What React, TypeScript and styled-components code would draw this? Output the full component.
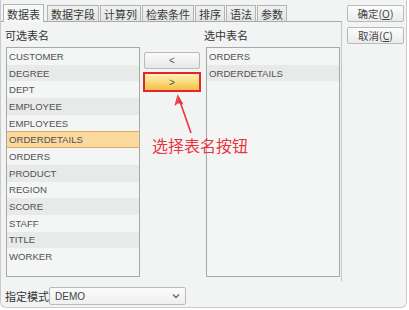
import React from 'react';
import styled, { createGlobalStyle } from 'styled-components';

const GlobalStyle = createGlobalStyle`
  html, body {
    margin: 0;
    padding: 0;
    background: #ffffff;
  }
  body {
    font-family: "Liberation Sans", "Noto Sans CJK SC", sans-serif;
  }
`;

const cjk = `"Noto Sans CJK SC", "Liberation Sans", sans-serif`;
const latin = `"Liberation Sans", "Noto Sans CJK SC", sans-serif`;

const Dialog = styled.div`
  position: relative;
  width: 407px;
  height: 308px;
  box-sizing: border-box;
  background: #f2f3f3;
  border: 1px solid #c9caca;
  border-top: none;
  border-radius: 0 0 6px 6px;
  display: flex;
  flex-direction: column;
  overflow: hidden;
`;

const TopRow = styled.div`
  display: flex;
  flex-direction: row;
`;

const TabArea = styled.div`
  width: 341px;
  display: flex;
  flex-direction: column;
`;

const TabBar = styled.div`
  height: 21px;
  display: flex;
  align-items: flex-end;
  gap: 1px;
  padding-left: 2px;
`;

const Tab: any = styled.div`
  height: ${(p: any) => (p.active ? '18px' : '16px')};
  box-sizing: border-box;
  padding: 0 3px;
  display: flex;
  align-items: center;
  font-family: ${cjk};
  font-size: 11px;
  color: #3a3a3a;
  border: 1px solid #b3b4b4;
  border-bottom: none;
  background: ${(p: any) =>
    p.active ? '#f7f8f8' : 'linear-gradient(#f0f1f1, #e3e4e4)'};
  margin-bottom: ${(p: any) => (p.active ? '-1px' : '0')};
  position: relative;
  z-index: ${(p: any) => (p.active ? 1 : 0)};
  margin-right: ${(p: any) => (p.active ? '2px' : '0')};
`;

const Panel = styled.div`
  border-top: 1px solid #a9aaaa;
  border-right: 1px solid #c4c5c5;
  height: 259px;
  display: flex;
  flex-direction: column;
  padding-left: 4px;
`;

const LabelRow = styled.div`
  height: 25px;
  display: flex;
`;

const Caption: any = styled.div`
  font-family: ${cjk};
  font-size: 11px;
  line-height: 13px;
  padding-top: ${(p: any) => (p.flat ? 0 : 7)}px;
  color: #333333;
  width: ${(p: any) => p.width}px;
`;

const ListsRow = styled.div`
  display: flex;
  flex-direction: row;
  align-items: flex-start;
`;

const ListBox: any = styled.div`
  width: 134px;
  height: 230px;
  box-sizing: border-box;
  border: 1px solid #a7a8a8;
  background: #f4f5f5;
  margin-left: ${(p: any) => p.offset || 0}px;
  overflow: hidden;
`;

const ListRow: any = styled.div`
  height: 16.7px;
  box-sizing: border-box;
  display: flex;
  align-items: center;
  padding-left: 2px;
  font-family: ${latin};
  font-size: 9.6px;
  color: #525252;
  background: ${(p: any) =>
    p.selected ? '#fbd99d' : p.odd ? '#e8e9e9' : 'transparent'};
  border: 1px solid ${(p: any) => (p.selected ? '#dcab62' : 'transparent')};
  border-left: none;
  border-right: none;
`;

const MoveColumn = styled.div`
  width: 58px;
  margin-left: 3px;
  padding-top: 5px;
  display: flex;
  flex-direction: column;
  align-items: center;
  gap: 3px;
`;

const MoveButton: any = styled.div`
  box-sizing: border-box;
  width: ${(p: any) => (p.highlight ? '58px' : '56px')};
  height: ${(p: any) => (p.highlight ? '20px' : '17px')};
  display: flex;
  align-items: center;
  justify-content: center;
  font-family: ${latin};
  font-size: 10px;
  color: #555555;
  border: ${(p: any) => (p.highlight ? '2px solid #e3262b' : '1px solid #b9baba')};
  background: ${(p: any) =>
    p.highlight
      ? 'linear-gradient(#fdf1b8, #f9d977 55%, #f4bd45)'
      : 'linear-gradient(#fbfbfb, #e6e7e7)'};
  border-radius: ${(p: any) => (p.highlight ? '0' : '2px')};
`;

const SideButtons = styled.div`
  margin-left: 5px;
  padding-top: 5px;
  display: flex;
  flex-direction: column;
  gap: 5px;
`;

const DialogButton = styled.div`
  width: 57px;
  height: 17px;
  box-sizing: border-box;
  display: flex;
  align-items: center;
  justify-content: center;
  font-family: ${cjk};
  font-size: 10.5px;
  color: #444444;
  border: 1px solid #b8b9b9;
  border-radius: 2px;
  background: linear-gradient(#fdfdfd, #eaebeb);
  u {
    text-decoration: underline;
  }
`;

const BottomRow = styled.div`
  display: flex;
  align-items: center;
  padding: 6px 0 0 4px;
`;

const SchemaSelect = styled.div`
  width: 137px;
  height: 18px;
  box-sizing: border-box;
  border: 1px solid #b9baba;
  border-radius: 2px;
  background: linear-gradient(#fbfbfb, #eeefef);
  display: flex;
  align-items: center;
  justify-content: space-between;
  padding: 0 5px;
  font-family: ${latin};
  font-size: 10px;
  color: #444444;
`;

const Annotation = styled.div`
  position: absolute;
  left: 151px;
  top: 136px;
  font-family: ${cjk};
  font-size: 16px;
  line-height: 18px;
  color: #e8353f;
  white-space: nowrap;
`;

const ArrowSvg = styled.svg`
  position: absolute;
  left: 0;
  top: 0;
  pointer-events: none;
`;

const tabs = ['数据表', '数据字段', '计算列', '检索条件', '排序', '语法', '参数'];
const available = [
  'CUSTOMER',
  'DEGREE',
  'DEPT',
  'EMPLOYEE',
  'EMPLOYEES',
  'ORDERDETAILS',
  'ORDERS',
  'PRODUCT',
  'REGION',
  'SCORE',
  'STAFF',
  'TITLE',
  'WORKER',
];
const chosen = ['ORDERS', 'ORDERDETAILS'];

export default function App() {
  return (
    <>
      <GlobalStyle />
      <Dialog>
        <TopRow>
          <TabArea>
            <TabBar>
              {tabs.map((t, i) => (
                <Tab key={t} active={i === 0}>
                  {t}
                </Tab>
              ))}
            </TabBar>
            <Panel>
              <LabelRow>
                <Caption width={199}>可选表名</Caption>
                <Caption width={120}>选中表名</Caption>
              </LabelRow>
              <ListsRow>
                <ListBox offset={1}>
                  {available.map((name, i) => (
                    <ListRow key={name} odd={i % 2 === 1} selected={name === 'ORDERDETAILS'}>
                      {name}
                    </ListRow>
                  ))}
                </ListBox>
                <MoveColumn>
                  <MoveButton>&lt;</MoveButton>
                  <MoveButton highlight>&gt;</MoveButton>
                </MoveColumn>
                <ListBox offset={5}>
                  {chosen.map((name, i) => (
                    <ListRow key={name} odd={i % 2 === 1}>
                      {name}
                    </ListRow>
                  ))}
                </ListBox>
              </ListsRow>
            </Panel>
          </TabArea>
          <SideButtons>
            <DialogButton>
              确定(<u>O</u>)
            </DialogButton>
            <DialogButton>
              取消(<u>C</u>)
            </DialogButton>
          </SideButtons>
        </TopRow>
        <BottomRow>
          <Caption width={44} flat>
            指定模式
          </Caption>
          <SchemaSelect>
            <span>DEMO</span>
            <svg width="8" height="6" viewBox="0 0 8 6">
              <path d="M1 1.5 L4 4.5 L7 1.5" fill="none" stroke="#6a6a6a" strokeWidth="1.4" />
            </svg>
          </SchemaSelect>
        </BottomRow>
        <ArrowSvg width="409" height="310" viewBox="0 0 409 310">
          <line x1="190" y1="133" x2="179.5" y2="103" stroke="#e8353f" strokeWidth="1.6" />
          <path d="M176.5 94 L182.5 104.5 L176.8 103.2 Z" fill="#e8353f" />
          <path d="M176.5 94 L176.8 103.2 L173.5 106 Z" fill="#e8353f" />
        </ArrowSvg>
        <Annotation>选择表名按钮</Annotation>
      </Dialog>
    </>
  );
}
